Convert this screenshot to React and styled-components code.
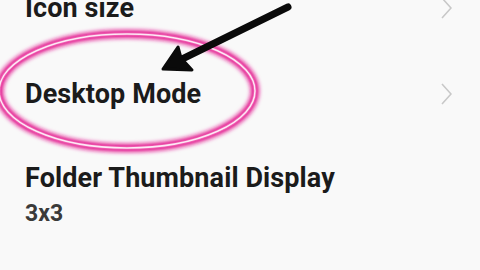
import React from 'react'
import styled, { createGlobalStyle } from 'styled-components'

const GlobalStyle = createGlobalStyle`
  html, body {
    margin: 0;
    padding: 0;
    background: #f9f9f9;
  }
  body {
    width: 480px;
    height: 270px;
    overflow: hidden;
    font-family: Roboto, "Liberation Sans", sans-serif;
  }
`;

const Screen = styled.div`
  position: relative;
  width: 480px;
  height: 270px;
  overflow: hidden;
  background: #f9f9f9;
`;

const List = styled.div`
  display: flex;
  flex-direction: column;
  margin-top: -35px;
`;

const Row = styled.div`
  display: flex;
  align-items: center;
  justify-content: space-between;
  height: ${p => p.h}px;
  padding: ${p => p.pt || 0}px 28px 0 25px;
  box-sizing: border-box;
  align-items: ${p => (p.top ? 'flex-start' : 'center')};
`;

const Texts = styled.div`
  display: flex;
  flex-direction: column;
`;

const Title = styled.div`
  font-size: 27px;
  font-weight: 700;
  line-height: 32px;
  color: #1b1b1b;
  letter-spacing: 0.1px;
`;

const Sub = styled.div`
  margin-top: 2px;
  font-size: 23px;
  font-weight: 700;
  line-height: 36px;
  color: #3a3a3a;
`;

const Chevron = () => (
  <svg width="12" height="22" viewBox="0 0 12 22">
    <path d="M2 1 L11 11 L2 21" fill="none" stroke="#c8c8c8" strokeWidth="1.6" />
  </svg>
);

const Overlay = styled.svg`
  position: absolute;
  left: 0;
  top: 0;
  pointer-events: none;
`;

const Annotation = () => (
  <Overlay width="480" height="270" viewBox="0 0 480 270">
    <defs>
      <filter id="glow" x="-20%" y="-30%" width="140%" height="160%">
        <feGaussianBlur stdDeviation="2" />
      </filter>
    </defs>
    <ellipse cx="127" cy="91" rx="128" ry="57" fill="none" stroke="#e2188c" strokeWidth="8" filter="url(#glow)" />
    <ellipse cx="127" cy="91" rx="128" ry="57" fill="none" stroke="#ee5cb0" strokeWidth="3.5" />
    <ellipse cx="127" cy="91" rx="128" ry="57" fill="none" stroke="#fde9f5" strokeWidth="1.5" />
    <path d="M288 7 L172 64" stroke="#0a0a0a" strokeWidth="7" strokeLinecap="round" fill="none" />
    <path d="M163 69 L178 47 L181 58 L192 70 Z" fill="#0a0a0a" stroke="#0a0a0a" strokeWidth="3" strokeLinejoin="round" />
  </Overlay>
);

export default function App() {
  return (
    <Screen>
      <GlobalStyle />
      <List>
        <Row h={86}>
          <Title>Icon size</Title>
          <Chevron />
        </Row>
        <Row h={86}>
          <Title>Desktop Mode</Title>
          <Chevron />
        </Row>
        <Row h={110} pt={25} top>
          <Texts>
            <Title>Folder Thumbnail Display</Title>
            <Sub>3x3</Sub>
          </Texts>
        </Row>
      </List>
      <Annotation />
    </Screen>
  )
}
